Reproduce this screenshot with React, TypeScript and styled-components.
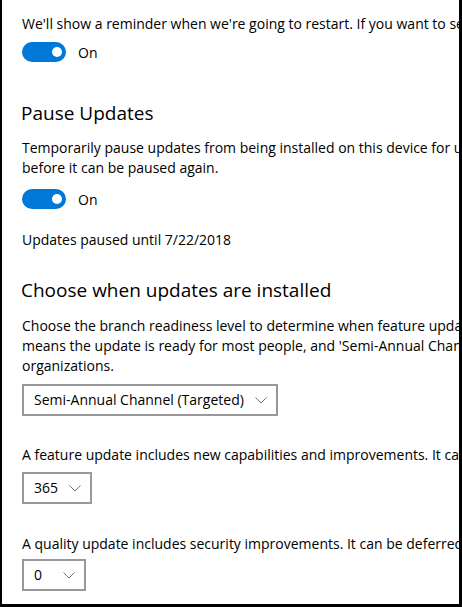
import { createGlobalStyle, styled } from 'styled-components';

const GlobalStyle = createGlobalStyle`
  html, body {
    margin: 0;
    background: #000;
  }
  body {
    font-family: "Open Sans", "Noto Sans", sans-serif;
    color: #000;
  }
`;

const SFrame = styled.div`
  box-sizing: border-box;
  width: 462px;
  height: 607px;
  overflow: hidden;
  background: #fff;
  border-style: solid;
  border-color: #000;
  border-width: 0 3px 3px 2px;
  padding: 14px 0 0 20px;
  white-space: nowrap;
`;

const SText = styled.div<{ $top?: number }>`
  font-size: 14px;
  line-height: 20px;
  margin-top: ${({ $top }) => $top ?? 0}px;
`;

const SHeading = styled.h2<{ $top: number }>`
  font-size: 19px;
  font-weight: 400;
  line-height: 28px;
  margin: ${({ $top }) => $top}px 0 0 -1px;
`;

const SToggleRow = styled.label<{ $top: number }>`
  display: flex;
  align-items: center;
  gap: 12px;
  height: 20px;
  margin-top: ${({ $top }) => $top}px;
  font-size: 14px;
`;

const STrack = styled.span`
  display: flex;
  align-items: center;
  justify-content: flex-end;
  box-sizing: border-box;
  width: 44px;
  height: 20px;
  padding-right: 4px;
  border-radius: 10px;
  background: #0078d7;
`;

const SKnob = styled.span`
  width: 10px;
  height: 10px;
  border-radius: 50%;
  background: #fff;
`;

const SSelect = styled.div<{ $top: number }>`
  display: inline-flex;
  align-items: center;
  justify-content: space-between;
  gap: 11px;
  box-sizing: border-box;
  min-width: 64px;
  height: 32px;
  padding: 0 9px 0 10px;
  margin-top: ${({ $top }) => $top}px;
  border: 2px solid #999;
  font-size: 14px;
  line-height: 20px;
`;

const SChevron = styled.svg`
  flex: none;
  width: 12px;
  height: 7px;
`;

const Toggle = ({ top }: { top: number }) => (
  <SToggleRow $top={top}>
    <STrack>
      <SKnob />
    </STrack>
    On
  </SToggleRow>
);

const Select = ({ value, top }: { value: string; top: number }) => (
  <div>
    <SSelect $top={top}>
      {value}
      <SChevron viewBox='0 0 12 7'>
        <path d='M0.5 0.5 L6 6 L11.5 0.5' fill='none' stroke='#767676' strokeWidth='1' />
      </SChevron>
    </SSelect>
  </div>
);

const App = () => (
  <>
    <GlobalStyle />
    <SFrame>
      <SText>
        We&apos;ll show a reminder when we&apos;re going to restart. If you want to see more notifications about
        restarting, turn this on.
      </SText>
      <Toggle top={8} />

      <SHeading $top={37}>Pause Updates</SHeading>
      <SText $top={11}>
        Temporarily pause updates from being installed on this device for up to 35 days. When updates resume, this
        device will need to get the latest updates
        <br />
        before it can be paused again.
      </SText>
      <Toggle top={11} />
      <SText $top={21}>Updates paused until 7/22/2018</SText>

      <SHeading $top={26}>Choose when updates are installed</SHeading>
      <SText $top={12}>
        Choose the branch readiness level to determine when feature updates are installed. &apos;Semi-Annual Channel
        (Targeted)&apos;
        <br />
        means the update is ready for most people, and &apos;Semi-Annual Channel&apos; means that it&apos;s ready for
        widespread use in
        <br />
        organizations.
      </SText>
      <Select value='Semi-Annual Channel (Targeted)' top={8} />

      <SText $top={29}>
        A feature update includes new capabilities and improvements. It can be deferred for this many days:
      </SText>
      <Select value='365' top={7} />

      <SText $top={30}>
        A quality update includes security improvements. It can be deferred for this many days:
      </SText>
      <Select value='0' top={5} />
    </SFrame>
  </>
);

export default App;
